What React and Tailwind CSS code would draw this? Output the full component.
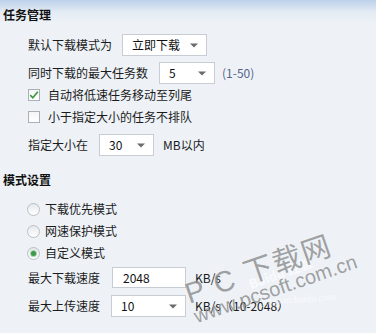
import React from 'react';

const FONT = "font-['Microsoft_YaHei','Noto_Sans_CJK_SC',sans-serif]";

function Arrow() {
  return (
    <svg width="8" height="5" viewBox="0 0 8 5" className="shrink-0">
      <path d="M0 0.5 H8 L4 4.5 Z" fill="#6b6b6b" />
    </svg>
  );
}

function Select({ value, width, ml }) {
  return (
    <div
      className={`flex h-[22px] items-center justify-between border border-[#c8cdd4] bg-white pl-[9px] pr-[8px] ${width} ${ml}`}
    >
      <span className="text-[12px] leading-none text-[#111]">{value}</span>
      <Arrow />
    </div>
  );
}

function Checkbox({ checked, label }) {
  return (
    <div className="flex h-[20px] items-center pl-[28px]">
      <div className="flex h-[12px] w-[12px] items-center justify-center border border-[#a9b0b8] bg-[linear-gradient(#f4f5f6,#ffffff)]">
        {checked && (
          <svg width="10" height="10" viewBox="0 0 10 10">
            <path d="M1.2 5.2 L3.8 7.8 L8.8 1.8" fill="none" stroke="#3e9a3b" strokeWidth="1.7" />
          </svg>
        )}
      </div>
      <span className="ml-[8px] text-[12px] leading-none text-[#1b1b1b]">{label}</span>
    </div>
  );
}

function Radio({ checked, label }) {
  return (
    <div className="flex h-[20px] items-center pl-[27px]">
      <div className="flex h-[13px] w-[13px] items-center justify-center rounded-full border border-[#b9bfc6] bg-[linear-gradient(#e6e9ec,#ffffff)]">
        {checked && <div className="h-[5px] w-[5px] rounded-full bg-[#3c9a4c] ring-1 ring-[#a8d4ae]" />}
      </div>
      <span className="ml-[5px] text-[12px] leading-none text-[#1b1b1b]">{label}</span>
    </div>
  );
}

export default function App() {
  return (
    <div
      className={`relative h-[333px] w-[376px] overflow-hidden bg-[linear-gradient(#bdd1ea_0px,#e4ebf4_12px,#eef2f7_24px)] ${FONT}`}
    >
      {/* 任务管理 */}
      <div className="pl-[3px] pt-[7px] text-[12px] font-bold leading-[16px] text-[#111]">任务管理</div>

      <div className="mt-[11px] flex items-center pl-[28px]">
        <span className="text-[12px] leading-none text-[#1b1b1b]">默认下载模式为</span>
        <Select value="立即下载" width="w-[85px]" ml="ml-[10px]" />
      </div>

      <div className="mt-[6px] flex items-center pl-[28px]">
        <span className="text-[12px] leading-none text-[#1b1b1b]">同时下载的最大任务数</span>
        <Select value="5" width="w-[56px]" ml="ml-[11px]" />
        <span className="ml-[7px] text-[12px] leading-none text-[#55658a]">(1-50)</span>
      </div>

      <div className="mt-[1px]">
        <Checkbox checked label="自动将低速任务移动至列尾" />
      </div>
      <div className="mt-[2px]">
        <Checkbox label="小于指定大小的任务不排队" />
      </div>

      <div className="mt-[7px] flex items-center pl-[28px]">
        <span className="text-[12px] leading-none text-[#1b1b1b]">指定大小在</span>
        <Select value="30" width="w-[55px]" ml="ml-[11px]" />
        <span className="ml-[9px] text-[12px] leading-none text-[#1b1b1b]">MB以内</span>
      </div>

      {/* 模式设置 */}
      <div className="mt-[16px] pl-[3px] text-[12px] font-bold leading-[16px] text-[#111]">模式设置</div>

      <div className="mt-[11px]">
        <Radio label="下载优先模式" />
      </div>
      <div className="mt-[2px]">
        <Radio label="网速保护模式" />
      </div>
      <div className="mt-[2px]">
        <Radio checked label="自定义模式" />
      </div>

      <div className="mt-[4px] flex items-center pl-[28px]">
        <span className="text-[12px] leading-none text-[#1b1b1b]">最大下载速度</span>
        <div className="ml-[12px] flex h-[21px] w-[74px] items-center border border-[#c8cdd4] bg-white pl-[10px]">
          <span className="text-[12px] leading-none text-[#111]">2048</span>
        </div>
        <span className="ml-[9px] text-[12px] leading-none text-[#1b1b1b]">KB/s</span>
      </div>

      <div className="mt-[7px] flex items-center pl-[28px]">
        <span className="text-[12px] leading-none text-[#1b1b1b]">最大上传速度</span>
        <Select value="10" width="w-[75px]" ml="ml-[11px]" />
        <span className="ml-[9px] text-[12px] leading-none text-[#1b1b1b]">KB/s（10-2048）</span>
      </div>

      {/* watermark */}
      <div className="pointer-events-none absolute left-[252px] top-[276px] origin-[0_100%] rotate-[-20deg] whitespace-nowrap text-[13px] font-bold leading-[16px] text-white/70">
        Bai<span className="text-white/60">du</span> 经验
      </div>
      <div className="pointer-events-none absolute left-[262px] top-[296px] origin-[0_100%] rotate-[-4deg] whitespace-nowrap font-['Liberation_Serif',serif] text-[10px] leading-[12px] text-white/60">
        jingyan.baidu.com
      </div>
      <div className="pointer-events-none absolute left-[189px] top-[279px] origin-[0_24px] rotate-[-19deg] whitespace-nowrap font-['Liberation_Sans','Noto_Sans_CJK_SC',sans-serif] text-[29px] leading-[30px] tracking-[0.05em] text-[#8a8a8a]/80">
        P C 下载网
      </div>
      <div className="pointer-events-none absolute left-[198px] top-[305px] origin-[0_100%] rotate-[-19deg] whitespace-nowrap font-['Liberation_Sans',sans-serif] text-[20px] leading-[22px] text-[#8a8a8a]/80">
        www.pcsoft.com.cn
      </div>
    </div>
  );
}
